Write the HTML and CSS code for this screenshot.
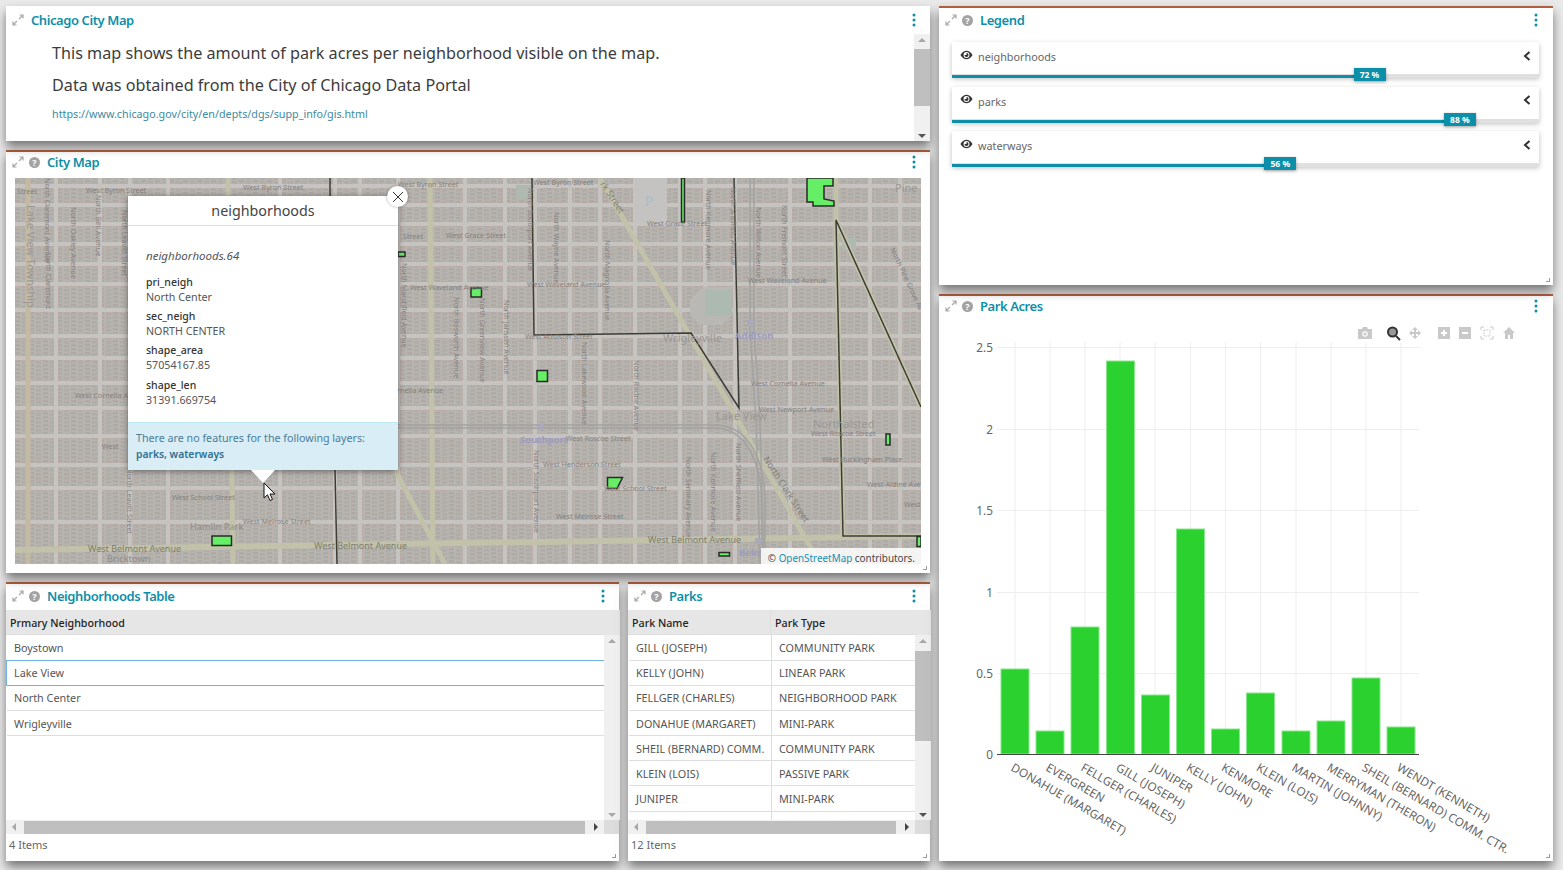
FILE: index.html
```html
<!DOCTYPE html>
<html lang="en">
<head>
    <meta charset="UTF-8">
    <title>Chicago City Map</title>
    <link rel="stylesheet" href="styles.css">
</head>
<body>
    <svg class="icon-defs" width="0" height="0">
        <symbol id="i-expand" viewBox="0 0 12 12">
            <path d="M7 5 10.5 1.5M7.5 1H11V4.5M5 7 1.500 10.500M1 7.500V11H4.500" fill="none" stroke="#a9a9a9" stroke-width="1.200"/>
        </symbol>
        <symbol id="i-kebab" viewBox="0 0 4 14">
            <circle cx="2" cy="2" r="1.500"/><circle cx="2" cy="7" r="1.500"/><circle cx="2" cy="12" r="1.500"/>
        </symbol>
        <symbol id="i-eye" viewBox="0 0 14 10">
            <path d="M0.500 5C2.500 1.800 4.700 .500 7 .500S11.500 1.800 13.500 5C11.500 8.200 9.300 9.500 7 9.500S2.500 8.200 .5 5Z" fill="#333"/>
            <circle cx="7" cy="5" r="3.200" fill="#fff"/>
            <path d="M7 2.800A2.200 2.200 0 1 1 4.800 5H7Z" fill="#333"/>
        </symbol>
        <symbol id="i-chevron" viewBox="0 0 8 10">
            <path d="M6.500 1 2 5 6.500 9" fill="none" stroke="#333" stroke-width="2"/>
        </symbol>
    </svg>

    <div class="dashboard">
        <div class="column">
            <section class="panel panel-info">
                <header class="panel-header">
                    <svg class="expand-icon"><use href="#i-expand"/></svg>
                    <h2 class="panel-title">Chicago City Map</h2>
                    <svg class="kebab"><use href="#i-kebab"/></svg>
                </header>
                <div class="info-body">
                    <div class="info-text">
                        <p>This map shows the amount of park acres per neighborhood visible on the map.</p>
                        <p>Data was obtained from the City of Chicago Data Portal</p>
                        <a class="info-link" href="#">https://www.chicago.gov/city/en/depts/dgs/supp_info/gis.html</a>
                    </div>
                    <div class="vscroll">
                        <span class="arrow arrow-up"></span>
                        <div class="vscroll-track"><div class="vscroll-thumb thumb-info"></div></div>
                        <span class="arrow arrow-down arrow-dark"></span>
                    </div>
                </div>
            </section>

            <section class="panel panel-map">
                <header class="panel-header">
                    <svg class="expand-icon"><use href="#i-expand"/></svg>
                    <span class="help-icon">?</span>
                    <h2 class="panel-title">City Map</h2>
                    <svg class="kebab"><use href="#i-kebab"/></svg>
                </header>
                <div class="map-body">
                    <div class="map">
                        <svg class="map-canvas" viewBox="15 178 906 386" width="906" height="386">
                            <defs>
                                <pattern id="blocks" width="14" height="4" patternUnits="userSpaceOnUse">
                                    <rect width="14" height="4" fill="#b7b3af"/>
                                    <rect x="1" y="0" width="5" height="2.500" fill="#aeaaa6"/>
                                    <rect x="8" y="1" width="5" height="2.500" fill="#b0aca8"/>
                                </pattern>
                            </defs>
                            <rect x="15" y="178" width="906" height="386" fill="url(#blocks)"/>

                            <g fill="none" stroke="#c0a8a3" stroke-width="6" stroke-dasharray="2 3">
                                <path d="M15 186H921M15 205H921M15 224H921M15 244H921M15 264H921M15 284H921M15 310H921M15 336H921M15 358H921M15 383H921M15 408H921M15 436H921M15 465H921M15 488H921M15 522H921"/>
                                <path d="M56 178V564M100 178V564M130 178V564M168 178V564M280 178V564M335 178V564M360 178V564M398 178V564M465 178V564M505 178V564M535 178V564M570 178V564M600 178V564M635 178V564M680 178V564M705 178V564M735 178V564M790 178V564M870 178V564M900 178V564"/>
                            </g>
                            <g fill="none" stroke="#c6c4c1" stroke-width="4">
                                <path d="M15 186H921M15 205H921M15 224H921M15 244H921M15 264H921M15 284H921M15 310H921M15 336H921M15 358H921M15 383H921M15 408H921M15 436H921M15 465H921M15 488H921M15 522H921"/>
                                <path d="M56 178V564M100 178V564M130 178V564M168 178V564M280 178V564M335 178V564M360 178V564M398 178V564M465 178V564M505 178V564M535 178V564M570 178V564M600 178V564M635 178V564M680 178V564M705 178V564M735 178V564M790 178V564M870 178V564M900 178V564"/>
                            </g>

                            <rect x="635" y="178" width="32" height="44" fill="#c4c3c1"/>
                            <path d="M690 300 703 287H732V315L722 325H700L690 315Z" fill="#bab8b4"/>
                            <rect x="705" y="290" width="27" height="26" fill="#adbab1"/>
                            <rect x="842" y="238" width="14" height="12" fill="#adbab1"/>
                            <rect x="516" y="185" width="18" height="14" fill="#b0b9af"/>

                            <g fill="none" stroke="#c2c2aa" stroke-width="5">
                                <path d="M28 178V564" stroke="#c4b9a3"/>
                                <path d="M228 178 233 564"/>
                                <path d="M430 178 433 564"/>
                                <path d="M600 178 820 564"/>
                                <path d="M395 470 445 564"/>
                                <path d="M836 178V220L843 536"/>
                                <path d="M836 220 921 407"/>
                                <path d="M15 550 921 536" stroke-width="6"/>
                            </g>

                            <g fill="none" stroke="#a3a3a2" stroke-width="1.500">
                                <path d="M398 428H715C745 428 760 460 762 500V564"/>
                                <path d="M398 425H718C750 428 764 460 765 500V564"/>
                                <path d="M750 178V330L756 420 760 564"/>
                                <path d="M754 178V330L760 420 764 564"/>
                            </g>
                            <rect x="538" y="424" width="6" height="6" fill="#a9a9bb"/>
                            <rect x="748" y="320" width="6" height="6" fill="#a9a9bb"/>
                            <rect x="755" y="538" width="6" height="6" fill="#a9a9bb"/>

                            <g fill="none" stroke="#3d3d36" stroke-width="1.500">
                                <path d="M532 178 534 335 691 333 739 408 734 178"/>
                                <path d="M921 407 836 220 843 536H921"/>
                                <path d="M330 178V196M335 470 337 564"/>
                            </g>

                            <g fill="#66ee66" stroke="#2a2a2a" stroke-width="1.500">
                                <path d="M807 178H833V186H824V199L834 201V206H813V202L807 202Z"/>
                                <rect x="681.500" y="178" width="3" height="44"/>
                                <rect x="398" y="252" width="7" height="4.500"/>
                                <rect x="471" y="288" width="10.500" height="9"/>
                                <rect x="537" y="370.500" width="10.500" height="11"/>
                                <rect x="886" y="434" width="4" height="11"/>
                                <path d="M607.500 477.500H622.500L617 488.500H607.500Z"/>
                                <rect x="212" y="536" width="19.500" height="9.500"/>
                                <rect x="719" y="552.500" width="10.500" height="3.500"/>
                                <rect x="917" y="536.500" width="4" height="10"/>
                            </g>

                            <g class="map-labels">
                                <text x="17" y="194">Street</text>
                                <text x="86" y="193">West Byron Street</text>
                                <text x="243" y="190">West Byron Street</text>
                                <text x="398" y="187">West Byron Street</text>
                                <text x="533" y="185">West Byron Street</text>
                                <text x="647" y="226">West Grace Street</text>
                                <text x="403" y="239">Street</text>
                                <text x="446" y="238">West Grace Street</text>
                                <text x="410" y="290">West Waveland Avenue</text>
                                <text x="527" y="287">West Waveland Avenue</text>
                                <text x="748" y="283">West Waveland Avenue</text>
                                <text x="75" y="398">West Cornelia Avenue</text>
                                <text x="397" y="393">rnelia Avenue</text>
                                <text x="751" y="386">West Cornelia Avenue</text>
                                <text x="759" y="412">West Newport Avenue</text>
                                <text x="566" y="441">West Roscoe Street</text>
                                <text x="811" y="436">West Roscoe Street</text>
                                <text x="543" y="467">West Henderson Street</text>
                                <text x="822" y="462">West Buckingham Place</text>
                                <text x="172" y="500">West School Street</text>
                                <text x="604" y="491">West School Street</text>
                                <text x="867" y="487">West Aldine Ave</text>
                                <text x="243" y="524">West Melrose Street</text>
                                <text x="556" y="519">West Melrose Street</text>
                                <text x="904" y="507">West</text>
                                <text x="525" y="339">West Addison Street</text>
                                <text x="102" y="449">West</text>
                                <text class="lbl-hamlin" x="190" y="530">Hamlin Park</text>
                                <text class="lbl-hamlin" x="107" y="562">Bricktown</text>
                                <text class="lbl-area" x="663" y="342">Wrigleyville</text>
                                <text class="lbl-area" x="716" y="420">Lake View</text>
                                <text class="lbl-area" x="813" y="428">Northalsted</text>
                                <text class="lbl-road" x="88" y="552">West Belmont Avenue</text>
                                <text class="lbl-road" x="314" y="549">West Belmont Avenue</text>
                                <text class="lbl-road" x="648" y="543">West Belmont Avenue</text>
                                <text class="lbl-stop" x="735" y="339">Addison</text>
                                <text class="lbl-stop" x="520" y="443">Southport</text>
                                <text class="lbl-stop" x="739" y="556">Belm</text>
                                <text class="lbl-area" x="895" y="192">Pine G</text>
                                <text class="lbl-p" x="645" y="206">P</text>
                                <text class="lbl-area" transform="translate(27,205) rotate(90)">Lake View Township</text>
                                <text transform="translate(45,178) rotate(90)">North Claremont Avenue</text>
                                <text transform="translate(46,252) rotate(90)">North Claremont</text>
                                <text transform="translate(71,207) rotate(90)">North Oakley Avenue</text>
                                <text transform="translate(96,195) rotate(90)">North Bell Avenue</text>
                                <text transform="translate(122,210) rotate(90)">North Leavitt Street</text>
                                <text transform="translate(127,468) rotate(90)">North Leavitt Street</text>
                                <text transform="translate(402,263) rotate(90)">North Marshfield Avenue</text>
                                <text transform="translate(454,297) rotate(90)">North Bosworth Avenue</text>
                                <text transform="translate(480,298) rotate(90)">North Greenview Avenue</text>
                                <text transform="translate(504,300) rotate(90)">North Janssen Avenue</text>
                                <text transform="translate(528,188) rotate(90)">North Southport Avenue</text>
                                <text transform="translate(554,212) rotate(90)">North Wayne Avenue</text>
                                <text transform="translate(605,240) rotate(90)">North Magnolia Avenue</text>
                                <text transform="translate(582,342) rotate(90)">North Lakewood Avenue</text>
                                <text transform="translate(634,360) rotate(90)">North Racine Avenue</text>
                                <text transform="translate(706,190) rotate(90)">North Kenmore Avenue</text>
                                <text transform="translate(731,187) rotate(90)">North Sheffield Avenue</text>
                                <text transform="translate(756,207) rotate(90)">North Wilton Avenue</text>
                                <text transform="translate(782,205) rotate(90)">North Fremont Street</text>
                                <text transform="translate(534,450) rotate(90)">North Southport Avenue</text>
                                <text transform="translate(686,457) rotate(90)">North Seminary Avenue</text>
                                <text transform="translate(711,452) rotate(90)">North Kenmore Avenue</text>
                                <text transform="translate(736,443) rotate(90)">North Sheffield Avenue</text>
                                <text transform="translate(890,249) rotate(65)">North Pine Grove Av</text>
                                <text class="lbl-road" transform="translate(763,459) rotate(57)">North Clark Street</text>
                                <text class="lbl-road" transform="translate(600,184) rotate(57)">rk Street</text>
                            </g>
                        </svg>

                        <div class="popup">
                            <h3 class="popup-title">neighborhoods</h3>
                            <div class="popup-content">
                                <p class="popup-id">neighborhoods.64</p>
                                <dl class="popup-list">
                                    <dt>pri_neigh</dt>
                                    <dd>North Center</dd>
                                    <dt>sec_neigh</dt>
                                    <dd>NORTH CENTER</dd>
                                    <dt>shape_area</dt>
                                    <dd>57054167.85</dd>
                                    <dt>shape_len</dt>
                                    <dd>31391.669754</dd>
                                </dl>
                            </div>
                            <div class="popup-note">
                                There are no features for the following layers:<br>
                                <strong>parks, waterways</strong>
                            </div>
                            <button class="popup-close">
                                <svg width="10" height="10" viewBox="0 0 10 10"><path d="M0 0 10 10M10 0 0 10" stroke="#333" stroke-width="1"/></svg>
                            </button>
                            <span class="popup-tip"></span>
                            <svg class="pointer" width="14" height="20" viewBox="0 0 14 20">
                                <path d="M1 1V16L4.500 12.800 7 18.500 9.500 17.400 7 12H12Z" fill="#fff" stroke="#111" stroke-width="1"/>
                            </svg>
                        </div>

                        <div class="attribution">© <a href="#">OpenStreetMap</a> contributors.</div>
                    </div>
                </div>
                <span class="resize-handle"></span>
            </section>

            <div class="table-row">
                <section class="panel">
                    <header class="panel-header">
                        <svg class="expand-icon"><use href="#i-expand"/></svg>
                        <span class="help-icon">?</span>
                        <h2 class="panel-title">Neighborhoods Table</h2>
                        <svg class="kebab"><use href="#i-kebab"/></svg>
                    </header>
                    <div class="grid-area">
                        <div class="grid-main">
                            <div class="grid-head"><div class="cell cell-head cell-single">Prmary Neighborhood</div></div>
                            <div class="grid-rows">
                                <div class="grid-row"><div class="cell">Boystown</div></div>
                                <div class="grid-row grid-row-active"><div class="cell">Lake View</div></div>
                                <div class="grid-row"><div class="cell">North Center</div></div>
                                <div class="grid-row"><div class="cell">Wrigleyville</div></div>
                            </div>
                        </div>
                        <div class="vscroll vscroll-grid">
                            <span class="arrow arrow-up"></span>
                            <div class="vscroll-track"></div>
                            <span class="arrow arrow-down"></span>
                        </div>
                        <div class="hscroll">
                            <span class="arrow arrow-left"></span>
                            <div class="hscroll-track"><div class="hscroll-thumb"></div></div>
                            <span class="arrow arrow-right"></span>
                        </div>
                        <div class="scroll-corner"></div>
                    </div>
                    <footer class="grid-footer">4 Items</footer>
                    <span class="resize-handle"></span>
                </section>

                <section class="panel">
                    <header class="panel-header">
                        <svg class="expand-icon"><use href="#i-expand"/></svg>
                        <span class="help-icon">?</span>
                        <h2 class="panel-title">Parks</h2>
                        <svg class="kebab"><use href="#i-kebab"/></svg>
                    </header>
                    <div class="grid-area">
                        <div class="grid-main">
                            <div class="grid-head grid-cols">
                                <div class="cell cell-head">Park Name</div>
                                <div class="cell cell-head">Park Type</div>
                            </div>
                            <div class="grid-rows">
                                <div class="grid-row grid-cols"><div class="cell">GILL (JOSEPH)</div><div class="cell">COMMUNITY PARK</div></div>
                                <div class="grid-row grid-cols"><div class="cell">KELLY (JOHN)</div><div class="cell">LINEAR PARK</div></div>
                                <div class="grid-row grid-cols"><div class="cell">FELLGER (CHARLES)</div><div class="cell">NEIGHBORHOOD PARK</div></div>
                                <div class="grid-row grid-cols"><div class="cell">DONAHUE (MARGARET)</div><div class="cell">MINI-PARK</div></div>
                                <div class="grid-row grid-cols"><div class="cell">SHEIL (BERNARD) COMM.</div><div class="cell">COMMUNITY PARK</div></div>
                                <div class="grid-row grid-cols"><div class="cell">KLEIN (LOIS)</div><div class="cell">PASSIVE PARK</div></div>
                                <div class="grid-row grid-cols"><div class="cell">JUNIPER</div><div class="cell">MINI-PARK</div></div>
                                <div class="grid-row grid-cols"><div class="cell"></div><div class="cell"></div></div>
                            </div>
                        </div>
                        <div class="vscroll vscroll-grid">
                            <span class="arrow arrow-up"></span>
                            <div class="vscroll-track"><div class="vscroll-thumb thumb-parks"></div></div>
                            <span class="arrow arrow-down arrow-dark"></span>
                        </div>
                        <div class="hscroll">
                            <span class="arrow arrow-left"></span>
                            <div class="hscroll-track"><div class="hscroll-thumb"></div></div>
                            <span class="arrow arrow-right"></span>
                        </div>
                        <div class="scroll-corner"></div>
                    </div>
                    <footer class="grid-footer">12 Items</footer>
                    <span class="resize-handle"></span>
                </section>
            </div>
        </div>

        <div class="column">
            <section class="panel panel-legend">
                <header class="panel-header">
                    <svg class="expand-icon"><use href="#i-expand"/></svg>
                    <span class="help-icon">?</span>
                    <h2 class="panel-title">Legend</h2>
                    <svg class="kebab"><use href="#i-kebab"/></svg>
                </header>
                <div class="legend-list">
                    <div class="legend-item">
                        <div class="legend-top">
                            <svg class="eye"><use href="#i-eye"/></svg>
                            <span class="legend-name">neighborhoods</span>
                            <svg class="chevron"><use href="#i-chevron"/></svg>
                        </div>
                        <div class="slider"><div class="slider-fill" style="width: 68.400%"><span class="slider-handle">72 %</span></div></div>
                    </div>
                    <div class="legend-item">
                        <div class="legend-top">
                            <svg class="eye"><use href="#i-eye"/></svg>
                            <span class="legend-name">parks</span>
                            <svg class="chevron"><use href="#i-chevron"/></svg>
                        </div>
                        <div class="slider"><div class="slider-fill" style="width: 83.800%"><span class="slider-handle">88 %</span></div></div>
                    </div>
                    <div class="legend-item">
                        <div class="legend-top">
                            <svg class="eye"><use href="#i-eye"/></svg>
                            <span class="legend-name">waterways</span>
                            <svg class="chevron"><use href="#i-chevron"/></svg>
                        </div>
                        <div class="slider"><div class="slider-fill" style="width: 53.200%"><span class="slider-handle">56 %</span></div></div>
                    </div>
                </div>
                <span class="resize-handle"></span>
            </section>

            <section class="panel panel-chart">
                <header class="panel-header">
                    <svg class="expand-icon"><use href="#i-expand"/></svg>
                    <span class="help-icon">?</span>
                    <h2 class="panel-title">Park Acres</h2>
                    <svg class="kebab"><use href="#i-kebab"/></svg>
                </header>
                <svg class="chart" viewBox="939 322 614 539" width="614" height="539">
                    <g stroke="#eeeeee" stroke-width="1">
                        <path d="M997 347.500H1419M997 429.500H1419M997 510.500H1419M997 592.500H1419M997 673.500H1419"/>
                        <path d="M1015 342V754M1050 342V754M1085 342V754M1120 342V754M1155 342V754M1190.500 342V754M1225.500 342V754M1260.500 342V754M1296 342V754M1331 342V754M1366 342V754M1401 342V754"/>
                    </g>
                    <g fill="#2ad12f" stroke="#8ae58c" stroke-width="1">
                        <rect x="1001" y="669" width="28" height="85"/>
                        <rect x="1036" y="731" width="28" height="23"/>
                        <rect x="1071" y="627" width="28" height="127"/>
                        <rect x="1106.500" y="361" width="28" height="393"/>
                        <rect x="1141.500" y="695" width="28" height="59"/>
                        <rect x="1176.500" y="529" width="28" height="225"/>
                        <rect x="1211.500" y="729" width="28" height="25"/>
                        <rect x="1246.500" y="693" width="28" height="61"/>
                        <rect x="1282" y="731" width="28" height="23"/>
                        <rect x="1317" y="721" width="28" height="33"/>
                        <rect x="1352" y="678" width="28" height="76"/>
                        <rect x="1387" y="727" width="28" height="27"/>
                    </g>
                    <path d="M997 754.500H1419" stroke="#444" stroke-width="1"/>
                    <g class="chart-labels" text-anchor="end">
                        <text x="993" y="351.500">2.5</text>
                        <text x="993" y="433.500">2</text>
                        <text x="993" y="514.500">1.5</text>
                        <text x="993" y="596.500">1</text>
                        <text x="993" y="677.500">0.5</text>
                        <text x="993" y="758.500">0</text>
                    </g>
                    <g class="chart-labels">
                        <text transform="translate(1010,770) rotate(30)">DONAHUE (MARGARET)</text>
                        <text transform="translate(1045,770) rotate(30)">EVERGREEN</text>
                        <text transform="translate(1080,770) rotate(30)">FELLGER (CHARLES)</text>
                        <text transform="translate(1115,770) rotate(30)">GILL (JOSEPH)</text>
                        <text transform="translate(1150,770) rotate(30)">JUNIPER</text>
                        <text transform="translate(1185.500,770) rotate(30)">KELLY (JOHN)</text>
                        <text transform="translate(1220.500,770) rotate(30)">KENMORE</text>
                        <text transform="translate(1255.500,770) rotate(30)">KLEIN (LOIS)</text>
                        <text transform="translate(1291,770) rotate(30)">MARTIN (JOHNNY)</text>
                        <text transform="translate(1326,770) rotate(30)">MERRYMAN (THERON)</text>
                        <text transform="translate(1361,770) rotate(30)">SHEIL (BERNARD) COMM. CTR.</text>
                        <text transform="translate(1396,770) rotate(30)">WENDT (KENNETH)</text>
                    </g>
                    <!-- plot toolbar -->
                    <g fill="#c9c9c9">
                        <path d="M1358 329H1362L1363 327H1367L1368 329H1372V339H1358Z"/>
                        <circle cx="1365" cy="334" r="2.800" fill="#fff"/>
                        <circle cx="1365" cy="334" r="1.600"/>
                        <path d="M1415 327 1418 330H1416V332H1418V330L1421 333 1418 336V334H1416V336H1418L1415 339 1412 336H1414V334H1412V336L1409 333 1412 330V332H1414V330H1412Z"/>
                        <path d="M1438 327H1450V339H1438ZM1443 330V332H1441V334H1443V336H1445V334H1447V332H1445V330Z" fill-rule="evenodd"/>
                        <path d="M1459 327H1471V339H1459ZM1462 332V334H1468V332Z" fill-rule="evenodd"/>
                        <path d="M1503 333 1509 327 1515 333H1513V339H1510V335H1508V339H1505V333Z"/>
                    </g>
                    <path d="M1481 330V327H1484M1490 327H1493V330M1493 336V339H1490M1484 339H1481V336" fill="none" stroke="#c9c9c9" stroke-width="1"/>
                    <rect x="1484" y="330" width="6" height="6" fill="none" stroke="#c9c9c9" stroke-width="1" stroke-dasharray="1.500 1"/>
                    <circle cx="1392.500" cy="332" r="4.500" fill="#999" stroke="#333" stroke-width="2"/>
                    <path d="M1396 336 1400 340" stroke="#333" stroke-width="2"/>
                </svg>
                <span class="resize-handle"></span>
            </section>
        </div>
    </div>
</body>
</html>
```

FILE: styles.css
```css
:root {
    --teal: #0e8fa9;
    --brown: #b0603c;
    --line: #dedede;
    --head-bg: #e6e6e6;
    --track: #f0f0f0;
    --thumb: #bfbfbf;
    --text-color: #444;
}

* {
    margin: 0;
    padding: 0;
    box-sizing: border-box;
}

body {
    font-family: "Noto Sans", "Open Sans", sans-serif;
    background-color: #eaeaea;
    color: var(--text-color);
    width: 1563px;
    height: 870px;
    overflow: hidden;
}

.icon-defs {
    position: absolute;
}

.dashboard {
    display: grid;
    grid-template-columns: 924px 614px;
    column-gap: 9px;
    padding: 6px 10px 9px 6px;
    height: 870px;
}

.column {
    display: flex;
    flex-direction: column;
    gap: 9px;
    min-height: 0;
}

.panel {
    position: relative;
    display: flex;
    flex-direction: column;
    background-color: #fff;
    border-top: 2px solid var(--brown);
    box-shadow: 0 6px 10px rgba(0, 0, 0, 0.5);
    min-width: 0;
}

.panel-info {
    height: 135px;
    border-top-color: #fff;
    z-index: 2;
}

.panel-map {
    height: 423px;
    z-index: 1;
}

.panel-legend {
    height: 279px;
    z-index: 1;
}

.panel-chart {
    height: 567px;
}

.table-row {
    display: grid;
    grid-template-columns: 613px 302px;
    column-gap: 9px;
    height: 279px;
}

.panel-header {
    display: flex;
    align-items: center;
    height: 26px;
    flex-shrink: 0;
    padding: 0 14px 2px 6px;
}

.panel-map .panel-header,
.panel-chart .panel-header {
    padding-bottom: 6px;
}

.panel-legend .panel-header,
.panel-chart .panel-header {
    padding-right: 15px;
}

.expand-icon {
    width: 12px;
    height: 12px;
    flex-shrink: 0;
}

.help-icon {
    width: 11px;
    height: 11px;
    margin-left: 5px;
    border-radius: 50%;
    background-color: #a3a3a3;
    color: #fff;
    font-size: 9px;
    font-weight: 700;
    line-height: 11px;
    text-align: center;
    flex-shrink: 0;
}

.panel-title {
    margin-left: 7px;
    font-size: 13px;
    font-weight: 600;
    letter-spacing: -0.42px;
    color: var(--teal);
}

.kebab {
    width: 4px;
    height: 14px;
    margin-left: auto;
    fill: var(--teal);
}

/* info panel */
.info-body {
    flex: 1;
    display: flex;
    min-height: 0;
}

.info-text {
    flex: 1;
    padding: 8px 0 0 46px;
    font-size: 16.180px;
    color: #3c3c3c;
}

.info-text p {
    line-height: 22px;
    margin-bottom: 10px;
}

.info-link {
    display: block;
    margin-top: 10px;
    font-size: 10.760px;
    color: #3e8aa0;
    text-decoration: none;
}

/* scrollbars */
.vscroll {
    width: 16px;
    display: flex;
    flex-direction: column;
    align-items: center;
    background-color: var(--track);
    padding: 4px 0 3px;
    flex-shrink: 0;
}

.vscroll-track {
    flex: 1;
    width: 100%;
    margin: 3px 0;
}

.vscroll-thumb {
    background-color: var(--thumb);
    width: 100%;
}

.thumb-info {
    height: 57px;
    margin-top: 4px;
}

.thumb-parks {
    height: 90px;
    margin-top: 5px;
}

.arrow {
    width: 0;
    height: 0;
    flex-shrink: 0;
    border-style: solid;
    border-color: transparent;
}

.arrow-up {
    border-width: 0 4px 4px;
    border-bottom-color: #a8a8a8;
}

.arrow-down {
    border-width: 4px 4px 0;
    border-top-color: #a8a8a8;
}

.arrow-dark {
    border-top-color: #555;
}

.arrow-left {
    border-width: 4px 4px 4px 0;
    border-right-color: #a8a8a8;
}

.arrow-right {
    border-width: 4px 0 4px 4px;
    border-left-color: #444;
}

.hscroll {
    display: flex;
    align-items: center;
    gap: 4px;
    padding: 0 6px;
    height: 14px;
    background-color: var(--track);
}

.hscroll-track {
    flex: 1;
    height: 13px;
    display: flex;
}

.hscroll-thumb {
    flex: 1;
    background-color: var(--thumb);
    margin-left: 4px;
    margin-right: 5px;
}

.scroll-corner {
    background-color: #dcdcdc;
}

/* data grids */
.grid-area {
    display: grid;
    grid-template-columns: 1fr 15px;
    grid-template-rows: 210px 14px;
    flex-shrink: 0;
    font-size: 10.800px;
}

.grid-main {
    min-width: 0;
    overflow: hidden;
}

.grid-head {
    height: 25.350px;
    background-color: var(--head-bg);
    border-bottom: 1px solid var(--line);
}

.grid-rows {
    margin-left: 1px;
}

.grid-row {
    height: 25.200px;
    border-bottom: 1px solid var(--line);
}

.grid-row-active {
    border-top: 1px solid #6fb4e2;
    border-bottom: 1px solid #6fb4e2;
    border-left: 1px solid #6fb4e2;
    margin: -1px 0 0 -1px;
    height: 26.200px;
}

.grid-cols {
    display: grid;
    grid-template-columns: 143px 1fr;
}

.cell {
    height: 100%;
    display: flex;
    align-items: center;
    padding-left: 7px;
    color: #555;
    white-space: nowrap;
    overflow: hidden;
}

.grid-cols .cell:first-child {
    border-right: 1px solid var(--line);
}

.cell-head {
    padding: 1px 0 0 4px;
    color: #222;
    font-size: 10.700px;
    font-weight: 500;
}

.grid-cols .cell-head {
    padding-left: 4px;
}

.vscroll-grid {
    padding-top: 29px;
    position: relative;
    background: linear-gradient(var(--head-bg) 25px, var(--track) 25px);
}

.grid-footer {
    flex: 1;
    display: flex;
    align-items: center;
    padding: 0 0 7px 3px;
    font-size: 11px;
    color: #666;
}

.resize-handle {
    position: absolute;
    right: 3px;
    bottom: 3px;
    width: 4px;
    height: 4px;
    border-right: 1px solid #999;
    border-bottom: 1px solid #999;
}

/* map */
.map-body {
    flex: 1;
    padding: 0 9px 9px;
    min-height: 0;
}

.map {
    position: relative;
    width: 906px;
    height: 386px;
    overflow: hidden;
}

.map-canvas {
    display: block;
}

.map-labels text {
    font-size: 7.200px;
    fill: #85827f;
}

.map-labels .lbl-area {
    font-size: 11px;
    fill: #9a9896;
}

.map-labels .lbl-hamlin {
    font-size: 9.300px;
    fill: #8f8d8b;
}

.map-labels .lbl-road {
    font-size: 9px;
    fill: #7f7f72;
}

.map-labels .lbl-stop {
    font-size: 9.500px;
    font-weight: 700;
    fill: #9c9cbd;
}

.map-labels .lbl-p {
    font-size: 14px;
    fill: #a9bfcc;
}

.popup {
    position: absolute;
    left: 113px;
    top: 18px;
    width: 270px;
    height: 274px;
    display: flex;
    flex-direction: column;
    background-color: #fff;
    box-shadow: 0 1px 6px rgba(0, 0, 0, 0.45);
}

.popup-title {
    height: 30px;
    flex-shrink: 0;
    border-bottom: 1px solid #ddd;
    font-size: 14.300px;
    font-weight: 400;
    line-height: 29px;
    text-align: center;
    color: #444;
}

.popup-content {
    flex: 1;
    padding: 22px 18px 0;
    font-size: 10.700px;
}

.popup-id {
    font-style: italic;
    font-size: 11.500px;
    color: #555;
    margin-bottom: 11.600px;
    line-height: 15px;
}

.popup-list dt {
    font-size: 10.500px;
    font-weight: 500;
    color: #333;
    line-height: 15px;
}

.popup-list dd {
    color: #555;
    line-height: 15px;
    margin-bottom: 4.400px;
}

.popup-note {
    height: 48px;
    flex-shrink: 0;
    padding: 7px 0 0 8px;
    background-color: #d9edf7;
    border-top: 1px solid #bce8f1;
    font-size: 10.700px;
    line-height: 16px;
    color: #4a7d98;
}

.popup-note strong {
    font-size: 10.300px;
    font-weight: 600;
    color: #31708f;
}

.popup-close {
    position: absolute;
    top: -10px;
    right: -10px;
    width: 21px;
    height: 21px;
    display: flex;
    align-items: center;
    justify-content: center;
    border: none;
    border-radius: 50%;
    background-color: #fff;
    box-shadow: 0 0 3px rgba(0, 0, 0, 0.35);
}

.popup-tip {
    position: absolute;
    left: 123px;
    bottom: -13px;
    width: 0;
    height: 0;
    border-style: solid;
    border-width: 13px 12px 0;
    border-color: #fff transparent transparent;
}

.pointer {
    position: absolute;
    left: 135px;
    bottom: -32px;
}

.attribution {
    position: absolute;
    right: 0;
    bottom: 0;
    height: 16px;
    padding: 0 6px 0 7px;
    background-color: rgba(255, 255, 255, 0.85);
    font-size: 9.900px;
    line-height: 20px;
    color: #444;
    overflow: hidden;
}

.attribution a {
    color: #1a8fb5;
    text-decoration: none;
}

/* legend */
.legend-list {
    display: flex;
    flex-direction: column;
    gap: 9.500px;
    padding: 8px 14px 0 13px;
}

.legend-item {
    position: relative;
    height: 35px;
    background-color: #fff;
    box-shadow: 0 2px 5px rgba(0, 0, 0, 0.25);
}

.legend-top {
    display: flex;
    align-items: center;
    padding: 7px 8px 0 8px;
}

.eye {
    width: 13px;
    height: 10px;
    margin-top: -4px;
    flex-shrink: 0;
}

.legend-name {
    margin-left: 5px;
    font-size: 10.800px;
    color: #666;
}

.chevron {
    width: 8px;
    height: 10px;
    margin-left: auto;
    margin-top: -2px;
}

.slider {
    position: absolute;
    left: 0;
    right: 0;
    bottom: -1px;
    height: 4px;
    background-color: #e0e0e0;
}

.slider-fill {
    position: relative;
    height: 3px;
    margin-top: 1px;
    background-color: var(--teal);
}

.slider-handle {
    position: absolute;
    right: -32px;
    top: -7px;
    width: 32px;
    height: 13px;
    background-color: var(--teal);
    box-shadow: 0 1px 3px rgba(0, 0, 0, 0.35);
    color: #fff;
    font-size: 8.500px;
    font-weight: 700;
    line-height: 13px;
    text-align: center;
}

/* chart */
.chart {
    display: block;
    flex-shrink: 0;
}

.chart-labels text {
    font-size: 11.800px;
    fill: #666;
}
```
